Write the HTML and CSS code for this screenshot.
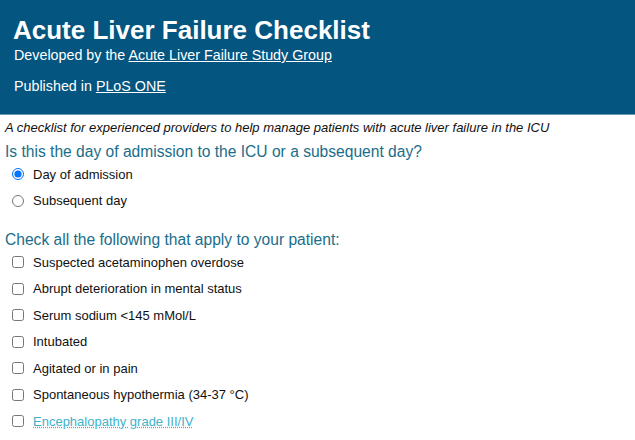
FILE: index.html
```html
<!DOCTYPE html>
<html lang="en">
<head>
    <meta charset="UTF-8">
    <title>Acute Liver Failure Checklist</title>
    <link rel="stylesheet" href="styles.css">
</head>
<body>
    <header>
        <h1>Acute Liver Failure Checklist</h1>
        <p class="credit">Developed by the <a href="#">Acute Liver Failure Study Group</a></p>
        <p class="credit published">Published in <a href="#">PLoS ONE</a></p>
    </header>
    <div class="content">
        <p class="intro">A checklist for experienced providers to help manage patients with acute liver failure in the ICU</p>
        <h3>Is this the day of admission to the ICU or a subsequent day?</h3>
        <label class="option"><input type="radio" name="day" checked> Day of admission</label>
        <label class="option"><input type="radio" name="day"> Subsequent day</label>

        <h3 class="second">Check all the following that apply to your patient:</h3>
        <label class="option"><input type="checkbox"> Suspected acetaminophen overdose</label>
        <label class="option"><input type="checkbox"> Abrupt deterioration in mental status</label>
        <label class="option"><input type="checkbox"> Serum sodium &lt;145 mMol/L</label>
        <label class="option"><input type="checkbox"> Intubated</label>
        <label class="option"><input type="checkbox"> Agitated or in pain</label>
        <label class="option"><input type="checkbox"> Spontaneous hypothermia (34-37 &deg;C)</label>
        <label class="option"><input type="checkbox"> <a href="#" class="term">Encephalopathy grade III/IV</a></label>
    </div>
</body>
</html>
```

FILE: styles.css
```css
body {
    font-family: "Liberation Sans", Arial, sans-serif;
    margin: 0;
    background-color: white;
    color: #111;
}
header {
    background-color: #04557f;
    color: white;
    padding: 15px 13px 0;
    height: 99px;
    border-bottom: 1px solid #6a98b6;
}
header h1 {
    margin: 0;
    font-size: 26px;
    line-height: 31px;
}
header a {
    color: white;
}
.credit {
    margin: 0 0 0 1px;
    font-size: 14.3px;
    line-height: 18px;
}
.published {
    margin-top: 13px;
}
.content {
    padding: 0 5px;
}
.intro {
    margin: 5px 0 0;
    font-size: 13px;
    font-style: italic;
    line-height: 16px;
}
h3 {
    margin: 7px 0 0;
    font-size: 15.6px;
    font-weight: normal;
    color: #1a6e8a;
    line-height: 18px;
}
h3.second {
    margin-top: 17px;
}
.option {
    display: flex;
    align-items: center;
    font-size: 13px;
    height: 26.5px;
    gap: 9px;
}
.option input {
    margin: 0 0 0 7px;
    width: 12px;
    height: 12px;
}
.term {
    color: #3db2cb;
    text-decoration: underline dotted;
}
```
